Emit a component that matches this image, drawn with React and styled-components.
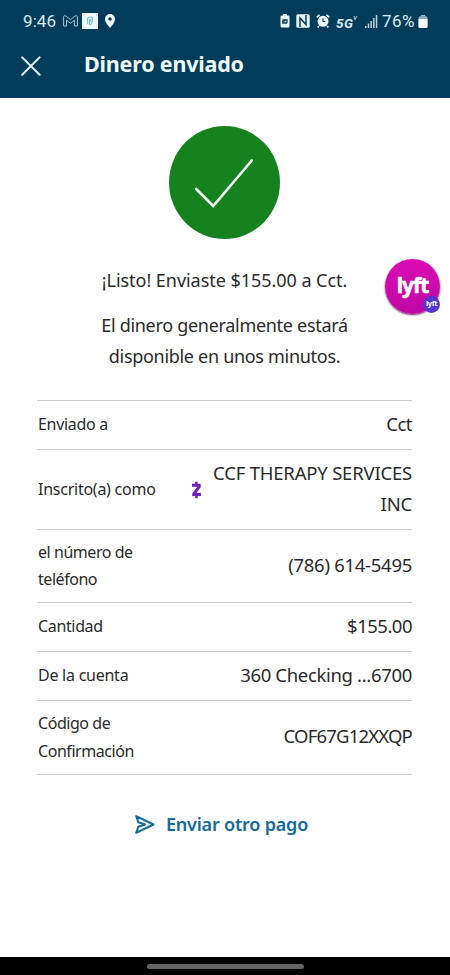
import React from 'react';
import styled, { createGlobalStyle } from 'styled-components';

const GlobalStyle = createGlobalStyle`
  * { box-sizing: border-box; }
  body { margin: 0; background: #fff; }
`;

const Screen = styled.div`
  position: relative;
  display: flex;
  flex-direction: column;
  width: 450px;
  height: 975px;
  overflow: hidden;
  background: #fefefe;
  color: #2b2b2b;
  font-family: 'Noto Sans', sans-serif;
`;

const Header = styled.header`
  height: 98px;
  flex: none;
  background: #023c5b;
  color: #eefafd;
`;

const StatusBar = styled.div`
  display: flex;
  align-items: center;
  justify-content: space-between;
  height: 42px;
  padding: 0 22px 0 23px;
  font-family: Roboto, sans-serif;
  font-size: 17px;
  color: #d9eaf0;
`;

const StatusGroup = styled.div`
  display: flex;
  align-items: center;
`;

const Clock = styled.span`
  width: 40px;
  letter-spacing: 0.1px;
`;

const Network = styled.span`
  margin-left: 6px;
  width: 26px;
  font-size: 13.5px;
  line-height: 16px;
  font-weight: 700;
  font-style: italic;
  white-space: nowrap;
  padding-top: 3px;
  letter-spacing: 0.4px;
`;

const Superscript = styled.span`
  display: inline-block;
  font-size: 8px;
  line-height: 8px;
  vertical-align: 8px;
  font-weight: 400;
`;

const Percent = styled.span`
  width: 36px;
  margin-left: 4px;
  letter-spacing: 0.4px;
`;

const Icon = styled.svg`
  display: block;
  flex: none;
  margin-left: ${p => p.$gap || 0}px;
`;

const TitleBar = styled.div`
  display: flex;
  align-items: center;
  height: 47px;
  padding-left: 21px;
`;

const Title = styled.h1`
  margin: -3px 0 0 43px;
  font-size: 21.5px;
  line-height: 30px;
  font-weight: 700;
  letter-spacing: ${p => p.$spacing}px;
`;

const Content = styled.main`
  flex: 1;
  display: flex;
  flex-direction: column;
  padding: 28px 38px 0 37px;
`;

const Badge = styled.div`
  align-self: center;
  display: flex;
  width: 111px;
  height: 113px;
  border-radius: 50%;
  background: #16821f;
`;

const Message = styled.p`
  margin: ${p => p.$top}px 0 0;
  text-align: center;
  font-size: 18px;
  line-height: 31px;
  letter-spacing: ${p => p.$spacing || 0}px;
  white-space: nowrap;
`;

const Details = styled.dl`
  margin: 28px 0 0;
  border-top: 1px solid #cfcfcf;
`;

const Row = styled.div`
  display: flex;
  align-items: center;
  height: ${p => p.$height}px;
  border-bottom: 1px solid #cfcfcf;
`;

const Label = styled.dt`
  flex: none;
  width: 130px;
  padding-left: 1px;
  font-size: 16px;
  line-height: 27.5px;
  letter-spacing: ${p => p.$spacing}px;
  white-space: pre-line;
`;

const Value = styled.dd`
  flex: 1;
  margin: 0;
  padding-bottom: 4px;
  text-align: right;
  font-size: 18.5px;
  line-height: 31px;
  white-space: pre;
  letter-spacing: ${p => p.$spacing}px;
`;

const SendAgain = styled.button`
  align-self: center;
  display: flex;
  align-items: center;
  margin: 35px 0 0 -6px;
  padding: 0;
  border: 0;
  background: none;
  color: #126b98;
  font: 600 18px/30px 'Noto Sans', sans-serif;
  letter-spacing: -0.2px;
`;

const SendText = styled.span`
  margin: -1px 0 0 11px;
`;

const LyftBubble = styled.div`
  position: absolute;
  top: 259px;
  left: 385px;
  display: flex;
  align-items: center;
  justify-content: center;
  width: 55px;
  height: 55px;
  border-radius: 50%;
  background: linear-gradient(#dc0bb5, #bd09a4);
  box-shadow: 0 1px 2px #6b2461;
  color: #fff;
  font: 700 21px/24px 'Noto Sans', sans-serif;
  letter-spacing: -1px;
  -webkit-text-stroke: 0.6px #fff;
  padding-bottom: 4px;
`;

const MiniBadge = styled.span`
  position: absolute;
  right: 0;
  bottom: 1px;
  width: 17px;
  height: 17px;
  border-radius: 50%;
  background: #5435cf;
  text-align: center;
  font: 700 7.5px/15px 'Noto Sans', sans-serif;
  letter-spacing: -0.4px;
  -webkit-text-stroke: 0;
`;

const NavBar = styled.footer`
  flex: none;
  height: 18px;
  padding-top: 7px;
  background: #000;
`;

const Handle = styled.div`
  width: 157px;
  height: 5px;
  margin: 0 auto;
  border-radius: 3px;
  background: #646464;
`;

const ZelleMark = () => (
  <Icon $gap={24} width="11" height="18" viewBox="0 0 11 18" fill="none" stroke="#6a20bd">
    <path d="M1 4.300h8.600M1.300 13.600h8.600M9 4.600l-6.600 8.700" strokeWidth="3" />
    <path d="M5.400.8v3M5.400 14v3.200" strokeWidth="2.400" />
  </Icon>
);

const rows = [
  { label: 'Enviado a', value: 'Cct', height: 49, ls: -0.3, vs: -0.5 },
  { label: 'Inscrito(a) como', value: 'CCF THERAPY SERVICES\nINC', height: 80, ls: -0.25, vs: -0.2, zelle: true },
  { label: 'el número de\nteléfono', value: '(786) 614-5495', height: 73, ls: -0.45, vs: -0.28 },
  { label: 'Cantidad', value: '$155.00', height: 49, ls: -0.35, vs: -0.5 },
  { label: 'De la cuenta', value: '360 Checking ...6700', height: 49, ls: -0.25, vs: -0.33 },
  { label: 'Código de\nConfirmación', value: 'COF67G12XXQP', height: 74, ls: -0.45, vs: -0.8 },
];

const StatusIcons = () => (
  <StatusGroup>
    <Icon width="10" height="14" viewBox="0 0 10 14">
      <path d="M3 0h4v1.500h1.500Q9.500 1.500 9.500 3v9q0 1.500-1.500 1.500H2Q.5 13.500.5 12V3q0-1.500 1.500-1.500h1z" fill="#eaf8fb" />
      <path d="M2.500 6h4.500v2.500M7.300 9h-4.500V7l2.500-.2" fill="none" stroke="#123f59" strokeWidth="1.300" />
    </Icon>
    <Icon $gap={6} width="14" height="14" viewBox="0 0 14 14">
      <rect x=".3" y=".3" width="13.400" height="13.400" rx="1.500" fill="#e6f5f9" />
      <path d="M4 13V4l6 6.500V1" fill="none" stroke="#093d59" strokeWidth="1.500" />
    </Icon>
    <Icon $gap={6} width="14" height="14" viewBox="0 0 14 14">
      <path d="M.7 3.300L3.600.9M13.300 3.300L10.400.9M3 12l-1.300 1.300M11 12l1.300 1.300" stroke="#eaf8fb" strokeWidth="1.700" />
      <circle cx="7" cy="7.300" r="5.500" fill="#eaf8fb" />
      <path d="M7 4.300v3.200h2.400" fill="none" stroke="#123f59" strokeWidth="1.100" />
    </Icon>
    <Network>5G<Superscript>v</Superscript></Network>
    <Icon $gap={3} width="13" height="13" viewBox="0 0 13 13" fill="#bbd2dc">
      <path d="M0 11h1.500v2H0zM2.700 8.500h1.500V13H2.700zM5.400 6h1.500v7H5.400zM8.100 3h1.500v10H8.100zM10.800 0h1.500v13h-1.500z" />
    </Icon>
    <Percent>76%</Percent>
    <Icon width="10" height="13" viewBox="0 0 10 13">
      <path d="M3 0h4v1.500h-4z" fill="#9bb6c2" />
      <rect x=".5" y="1.200" width="9" height="11.800" rx="1.500" fill="#91adb9" />
      <path d="M.5 4h9v7.500q0 1.500-1.500 1.500H2Q.5 13 .5 11.500z" fill="#f1fcff" />
    </Icon>
  </StatusGroup>
);

const App = () => (
  <Screen>
    <GlobalStyle />
    <Header>
      <StatusBar>
        <StatusGroup>
          <Clock>9:46</Clock>
          <Icon width="15" height="12" viewBox="0 0 15 12" fill="none" stroke="#a8c6d2" strokeWidth="1">
            <path d="M.6 11V1.500Q1.500.3 3 1l4.500 3.700L12 1q1.500-.7 2.400.5V11h-3V5.200L7.500 8.300 3.600 5.200V11z" />
          </Icon>
          <Icon $gap={4} width="16" height="16" viewBox="0 0 16 16">
            <path d="M0 0h16v16H0z" fill="#eefafd" />
            <path d="M5.500 11V6.500q0-2.500 2.500-2.500t2.500 2.500Q10.500 10 8.500 12M7.500 12V7q.5-1.500 1 0v2" fill="none" stroke="#82c4c9" strokeWidth="1.200" />
          </Icon>
          <Icon $gap={7} width="10" height="14" viewBox="0 0 10 14">
            <path d="M5 0a5 5 0 0 0-5 5c0 3.500 5 9 5 9s5-5.500 5-9a5 5 0 0 0-5-5z" fill="#eefafd" />
            <circle cx="5" cy="5" r="1.800" fill="#093d59" />
          </Icon>
        </StatusGroup>
        <StatusIcons />
      </StatusBar>
      <TitleBar>
        <Icon width="20" height="20" viewBox="0 0 20 20" fill="none" stroke="#e7f5f9" strokeWidth="2" strokeLinecap="round">
          <path d="M1.200 1.400l17.400 17.400M18.600 1.400L1.200 18.800" />
        </Icon>
        <Title $spacing={-0.2}>Dinero enviado</Title>
      </TitleBar>
    </Header>
    <Content>
      <Badge>
        <svg width="111" height="113" viewBox="0 0 111 113" fill="none" stroke="#f4fff3" strokeWidth="2.600" strokeLinecap="round">
          <path d="M27.200 63l17 17L82.800 34.500" />
        </svg>
      </Badge>
      <Message $top={26} $spacing={-0.04}>¡Listo! Enviaste $155.00 a Cct.</Message>
      <Message $top={14} $spacing={-0.3}>El dinero generalmente estará<br />disponible en unos minutos.</Message>
      <Details>
        {rows.map(row => (
          <Row key={row.label} $height={row.height}>
            <Label $spacing={row.ls}>{row.label}</Label>
            {row.zelle && <ZelleMark />}
            <Value $spacing={row.vs}>{row.value}</Value>
          </Row>
        ))}
      </Details>
      <SendAgain>
        <Icon width="20" height="19" viewBox="0 0 20 19" fill="none" stroke="#126b98" strokeWidth="2" strokeLinejoin="round">
          <path d="M1.200 1.200L18.500 9.500 1.200 17.800 3.400 11.700 10 9.500 3.400 7.300z" />
        </Icon>
        <SendText>Enviar otro pago</SendText>
      </SendAgain>
    </Content>
    <NavBar><Handle /></NavBar>
    <LyftBubble>lyft<MiniBadge>lyft</MiniBadge></LyftBubble>
  </Screen>
);

export default App;
